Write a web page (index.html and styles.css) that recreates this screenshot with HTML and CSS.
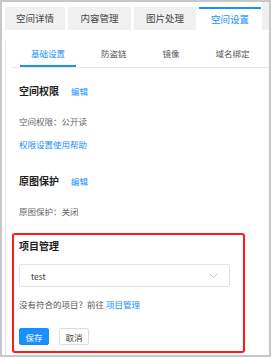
FILE: index.html
```html
<!DOCTYPE html>
<html lang="zh">
<head>
  <meta charset="UTF-8" />
  <title>空间设置</title>
  <link rel="stylesheet" href="styles.css">
</head>
<body>
  <div class="frame">
    <div class="tabs">
      <div class="tab">空间详情</div>
      <div class="tab">内容管理</div>
      <div class="tab">图片处理</div>
      <div class="tab active">空间设置</div>
      <div class="tabs-rest"></div>
    </div>

    <div class="panel">
      <div class="subnav">
        <div class="subtab active">基础设置</div>
        <div class="subtab">防盗链</div>
        <div class="subtab">镜像</div>
        <div class="subtab">域名绑定</div>
      </div>

      <div class="section">
        <div class="head">
          <span class="title">空间权限</span>
          <a class="link">编辑</a>
        </div>
        <div class="line first">空间权限：公开读</div>
        <a class="line link help">权限设置使用帮助</a>
      </div>

      <div class="section second">
        <div class="head">
          <span class="title">原图保护</span>
          <a class="link">编辑</a>
        </div>
        <div class="line first">原图保护：关闭</div>
      </div>

      <div class="project">
        <div class="head">
          <span class="title">项目管理</span>
        </div>
        <div class="select">
          <span>test</span>
          <svg width="9" height="6" viewBox="0 0 9 6"><path d="M0.8 1 L4.5 4.6 L8.2 1" fill="none" stroke="#b8b8b8" stroke-width="0.9"/></svg>
        </div>
        <div class="hint">没有符合的项目？前往 <a class="link">项目管理</a></div>
        <div class="buttons">
          <button class="btn primary">保存</button>
          <button class="btn">取消</button>
        </div>
      </div>
    </div>
  </div>
</body>
</html>
```

FILE: styles.css
```css
body {
  margin: 0;
  background: #fff;
  font-family: "Noto Sans CJK SC", "Noto Sans", sans-serif;
  color: #333;
}

.frame {
  width: 264px;
  height: 353px;
  padding-left: 3px;
  border: 2px solid #c8c8c8;
  overflow: hidden;
}

.tabs {
  display: flex;
  gap: 3px;
  height: 28px;
}

.tab {
  margin-top: 5px;
  width: 60px;
  height: 23px;
  line-height: 23px;
  text-align: center;
  font-size: 9.5px;
  color: #444;
  background: #f0f0f0;
}

.tab:nth-child(2) { width: 63px; }
.tab:nth-child(3) { width: 62px; }

.tab.active {
  width: 62px;
  height: 21px;
  line-height: 21px;
  border-top: 2px solid #1890ff;
  background: #fff;
  color: #1890ff;
}

.tabs-rest {
  flex: 1;
  margin-left: -2px;
  background: #f0f0f0;
}

.panel {
  height: 325px;
  padding-left: 6px;
  border-left: 1px solid #e6e6e6;
}

.subnav {
  display: flex;
  gap: 14px;
  margin-top: 11px;
  padding-left: 8px;
  border-bottom: 1px solid #e8e8e8;
}

.subtab {
  padding: 0 11px;
  height: 24px;
  line-height: 24px;
  font-size: 8.5px;
  color: #555;
  border-bottom: 2px solid transparent;
}

.subtab.active {
  color: #1890ff;
  border-bottom-color: #1890ff;
}

.section {
  margin-left: 7px;
  margin-top: 16px;
}

.section.second { margin-top: 23px; }

.head {
  display: flex;
  align-items: baseline;
  gap: 12px;
  height: 14px;
  line-height: 14px;
}

.title {
  font-size: 10px;
  font-weight: bold;
  color: #222;
}

.link {
  font-size: 8.5px;
  color: #1890ff;
}

.line {
  display: block;
  height: 14px;
  font-size: 8.5px;
  line-height: 14px;
  color: #666;
}

.line.first { margin-top: 16px; }
.line.help { margin-top: 9px; color: #1890ff; }

.project {
  margin-top: 15px;
  width: 224px;
  padding: 4px 0 6px 5px;
  border: 2px solid #ff1a1a;
  border-radius: 3px;
}

.select {
  display: flex;
  align-items: center;
  justify-content: space-between;
  box-sizing: border-box;
  width: 211px;
  height: 23px;
  margin-top: 11px;
  padding: 0 11px;
  border: 1px solid #e2e2e2;
  border-radius: 2px;
  font-size: 8.5px;
  color: #444;
}

.hint {
  height: 14px;
  margin-top: 10px;
  line-height: 14px;
  font-size: 8.5px;
  color: #555;
}

.buttons {
  display: flex;
  gap: 10px;
  margin-top: 17px;
}

.btn {
  box-sizing: border-box;
  width: 30px;
  height: 17px;
  padding: 0;
  font-family: inherit;
  font-size: 8.5px;
  color: #444;
  background: #fff;
  border: 1px solid #ddd;
  border-radius: 2px;
}

.btn.primary {
  background: #1890ff;
  border-color: #1890ff;
  color: #fff;
}
```
